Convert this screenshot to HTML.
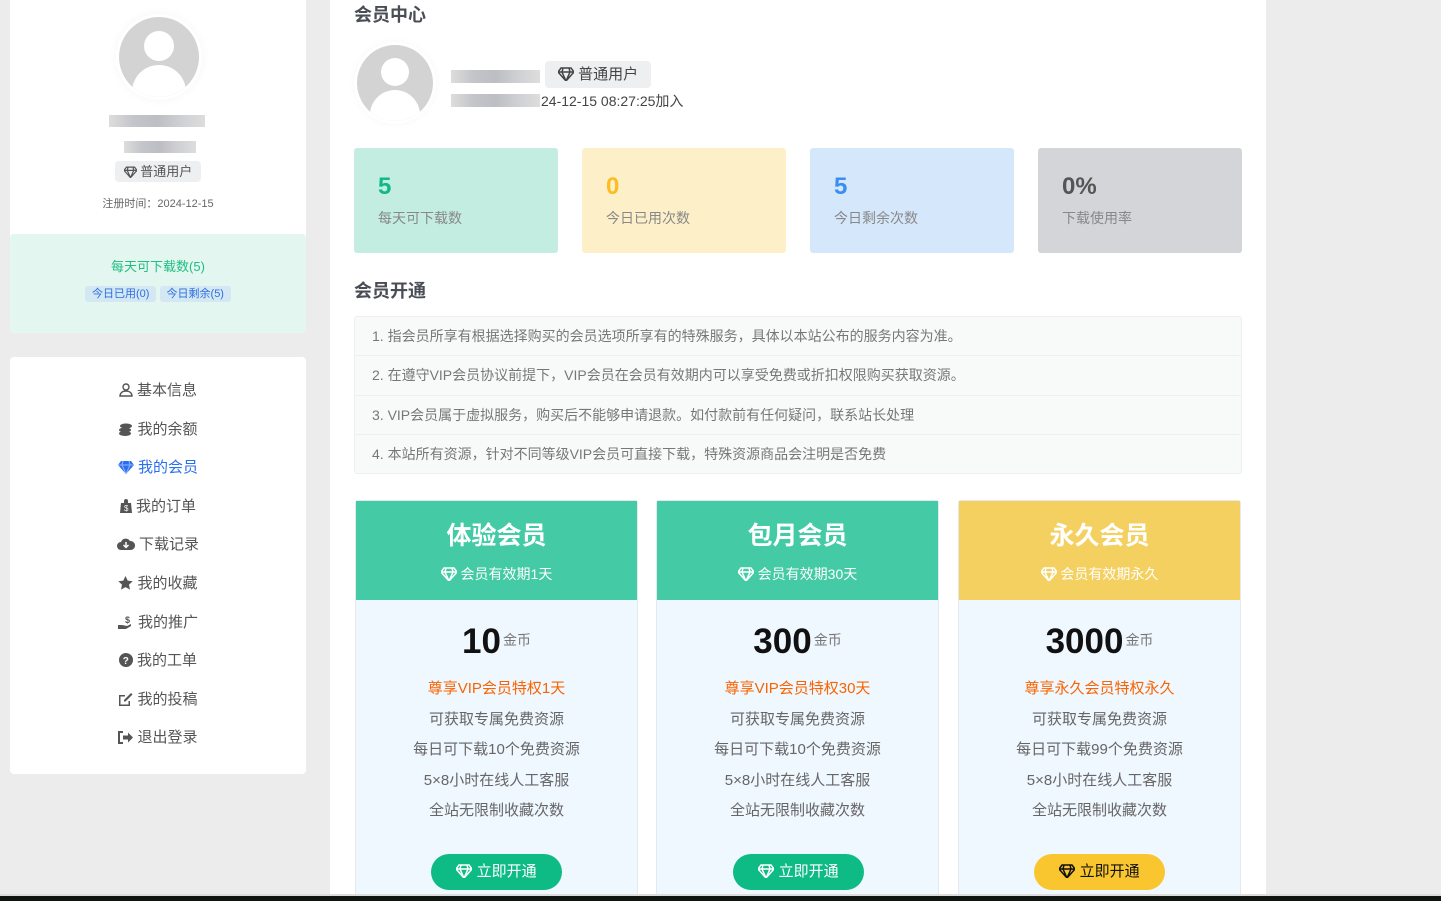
<!DOCTYPE html>
<html><head><meta charset="utf-8"><style>
*{box-sizing:border-box;margin:0;padding:0}
body{width:1441px;height:901px;background:#ececec;font-family:"Liberation Sans","Noto Sans CJK SC",sans-serif;position:relative;overflow:hidden;color:#555}
.abs{position:absolute}
.card{background:#fff;border-radius:4px}
.blur{background:linear-gradient(90deg,#ddd,#c4c5ca,#bdbec3,#cfd0d4,#ddd)}
.dia{display:inline-block;vertical-align:-2px}
.menu div{height:38.6px;line-height:38.6px;text-align:center;font-size:15px;color:#555}
.menu svg{vertical-align:-2px;margin-right:4px}
.stat{position:absolute;top:148px;width:204px;height:105px;border-radius:3px;padding:24px 24px}
.stat b{display:block;font-size:24px;line-height:30px}
.stat span{display:block;font-size:14px;color:#888;margin-top:6px}
.notes{position:absolute;left:354px;top:316px;width:888px;height:158px;border:1px solid #eef0f0;background:#f8fafa;border-radius:3px}
.notes div{height:39.3px;line-height:38px;padding-left:17px;font-size:14px;color:#777;border-bottom:1px solid #eef0f0}
.notes div:last-child{border:0}
.pc{position:absolute;top:500px;width:283px;height:400px;background:#eff7ff;border:1px solid #e6e9ec;border-radius:3px;text-align:center}
.pc .hd{height:99px;color:#fff;padding-top:18px}
.pc .hd h3{font-size:25px;line-height:34px;font-weight:bold}
.pc .hd p{font-size:14px;margin-top:11px}
.pc .pr{margin-top:20px;font-size:35px;font-weight:bold;color:#111;line-height:40px}
.pc .pr small{font-size:14px;font-weight:normal;color:#777;vertical-align:8px;margin-left:2px}
.pc .l{font-size:15px;color:#666;line-height:30.5px}
.pc .l.o{color:#fa6400;margin-top:12px}
.pc .btn{position:absolute;left:75px;top:353px;width:131px;height:36px;border-radius:18px;color:#fff;font-size:15px;line-height:36px}
</style></head><body>

<div class="abs card" style="left:10px;top:-4px;width:296px;height:337px;overflow:hidden">
  <div class="abs" style="left:109px;top:21px;width:80px;height:80px;border-radius:50%;background:#d3d3d3;box-shadow:0 0 0 3px #fff,0 0 12px #eee;overflow:hidden">
    <div class="abs" style="left:25px;top:14px;width:30px;height:30px;border-radius:50%;background:#fff"></div>
    <div class="abs" style="left:13px;top:48px;width:54px;height:40px;border-radius:27px 27px 0 0;background:#fff"></div>
  </div>
  <div class="abs blur" style="left:99px;top:119px;width:96px;height:12px"></div>
  <div class="abs blur" style="left:114px;top:145px;width:72px;height:12px"></div>
  <div class="abs" style="left:105px;top:165px;width:86px;height:21px;background:#eeeff1;border-radius:4px;font-size:13px;line-height:21px;text-align:center;color:#555"><svg class="dia" width="13" height="12" viewBox="0 0 16 14"><path d="M3 1h10l3 4-8 9-8-9z M0 5h16 M5 1l-1 4 4 9 4-9-1-4" fill="none" stroke="#555" stroke-width="1.5"/></svg> 普通用户</div>
  <div class="abs" style="left:0;width:296px;top:199px;text-align:center;font-size:11px;color:#666">注册时间：2024-12-15</div>
  <div class="abs" style="left:0;top:238px;width:296px;height:99px;background:#e3f6f0;border-radius:4px;text-align:center">
    <div style="margin-top:22px;font-size:13px;color:#1fbe84">每天可下载数(5)</div>
    <div style="margin-top:10px;font-size:11px"><span style="background:#d3e8f2;color:#2d6fe0;padding:2px 7px;border-radius:3px">今日已用(0)</span> <span style="background:#d3e8f2;color:#2d6fe0;padding:2px 7px;border-radius:3px">今日剩余(5)</span></div>
  </div>
</div>

<div class="abs card menu" style="left:10px;top:357px;width:296px;height:417px;padding-top:15px">
  <div><svg width="14" height="14" viewBox="0 0 14 14"><circle cx="7" cy="4" r="3" fill="none" stroke="#555" stroke-width="1.4"/><path d="M1 13c0-3 2.5-5 6-5s6 2 6 5z" fill="none" stroke="#555" stroke-width="1.4"/></svg>基本信息</div>
  <div><svg width="15" height="13" viewBox="0 0 15 13"><ellipse cx="8" cy="3" rx="6" ry="2.5" fill="#555"/><ellipse cx="7" cy="7" rx="6" ry="2.5" fill="#555"/><ellipse cx="7" cy="10.5" rx="6" ry="2.5" fill="#555"/></svg>我的余额</div>
  <div style="color:#2b6ff0"><svg width="16" height="14" viewBox="0 0 16 14"><path d="M3 1h10l3 4-8 9-8-9z" fill="#2b6ff0"/><path d="M5 1l-1 4 4 9 4-9-1-4M0 5h16" stroke="#8fb6ff" fill="none"/></svg>我的会员</div>
  <div><svg width="12" height="14" viewBox="0 0 12 14"><path d="M1 4h10l1 10H0z M4 4V2a2 2 0 014 0v2" fill="#555"/><text x="4" y="12" font-size="8" fill="#fff">$</text></svg>我的订单</div>
  <div><svg width="18" height="14" viewBox="0 0 18 14"><path d="M4 13a4 4 0 010-8 5 5 0 019-1 4 4 0 011 9z" fill="#555"/><path d="M9 5v5M6.5 8l2.5 2.5L11.5 8" stroke="#fff" stroke-width="1.5" fill="none"/></svg>下载记录</div>
  <div><svg width="15" height="14" viewBox="0 0 15 14"><path d="M7.5 0l2.2 4.6 5 .6-3.7 3.4 1 5-4.5-2.5L3 13.6l1-5L.3 5.2l5-.6z" fill="#555"/></svg>我的收藏</div>
  <div><svg width="16" height="14" viewBox="0 0 16 14"><path d="M0 10h4l5 1 4-2v2l-5 3H0z" fill="#555"/><text x="7" y="8" font-size="9" fill="#555" font-weight="bold">$</text></svg>我的推广</div>
  <div><svg width="14" height="14" viewBox="0 0 14 14"><circle cx="7" cy="7" r="7" fill="#555"/><text x="3.8" y="11" font-size="10" fill="#fff" font-weight="bold">?</text></svg>我的工单</div>
  <div><svg width="15" height="14" viewBox="0 0 15 14"><path d="M1 3h6v1.5H2.5v8h8V9H12v5H1z" fill="#555"/><path d="M6 8l7-7 1.5 1.5-7 7H6z" fill="#555"/></svg>我的投稿</div>
  <div><svg width="15" height="13" viewBox="0 0 15 13"><path d="M5 1H1v11h4" stroke="#555" stroke-width="2" fill="none"/><path d="M5 4.5h5V1.5l5 5-5 5v-3H5z" fill="#555"/></svg>退出登录</div>
</div>

<div class="abs" style="left:330px;top:0;width:936px;height:895px;background:#fff"></div>
<div class="abs" style="left:354px;top:1px;font-size:18px;font-weight:bold;color:#4a4d55">会员中心</div>
<div class="abs" style="left:357px;top:45px;width:76px;height:76px;border-radius:50%;background:#d3d3d3;box-shadow:0 0 0 3px #fff,0 0 10px #eee;overflow:hidden">
  <div class="abs" style="left:24px;top:13px;width:28px;height:28px;border-radius:50%;background:#fff"></div>
  <div class="abs" style="left:13px;top:45px;width:50px;height:40px;border-radius:25px 25px 0 0;background:#fff"></div>
</div>
<div class="abs blur" style="left:451px;top:70px;width:89px;height:13px"></div>
<div class="abs blur" style="left:451px;top:94px;width:89px;height:13px"></div>
<div class="abs" style="left:545px;top:61px;width:106px;height:27px;background:#eeeff1;border-radius:4px;font-size:15px;line-height:27px;text-align:center;color:#444"><svg class="dia" width="16" height="14" viewBox="0 0 16 14"><path d="M3 1h10l3 4-8 9-8-9z M0 5h16 M5 1l-1 4 4 9 4-9-1-4" fill="none" stroke="#444" stroke-width="1.5"/></svg> 普通用户</div>
<div class="abs" style="left:541px;top:91px;font-size:14px;color:#444">24-12-15 08:27:25加入</div>

<div class="stat" style="left:354px;background:#c2ede0"><b style="color:#12b886">5</b><span>每天可下载数</span></div>
<div class="stat" style="left:582px;background:#fdefc8"><b style="color:#fbbd1f">0</b><span>今日已用次数</span></div>
<div class="stat" style="left:810px;background:#d5e7fb"><b style="color:#3a8ef0">5</b><span>今日剩余次数</span></div>
<div class="stat" style="left:1038px;background:#d4d5d9"><b style="color:#555">0%</b><span>下载使用率</span></div>

<div class="abs" style="left:354px;top:277px;font-size:18px;font-weight:bold;color:#4a4d55">会员开通</div>
<div class="notes">
<div>1. 指会员所享有根据选择购买的会员选项所享有的特殊服务，具体以本站公布的服务内容为准。</div>
<div>2. 在遵守VIP会员协议前提下，VIP会员在会员有效期内可以享受免费或折扣权限购买获取资源。</div>
<div>3. VIP会员属于虚拟服务，购买后不能够申请退款。如付款前有任何疑问，联系站长处理</div>
<div>4. 本站所有资源，针对不同等级VIP会员可直接下载，特殊资源商品会注明是否免费</div>
</div>

<div class="pc" style="left:355px"><div class="hd" style="background:#44cba5"><h3>体验会员</h3><p><svg class="dia" width="16" height="14" viewBox="0 0 16 14"><path d="M3 1h10l3 4-8 9-8-9z M0 5h16 M5 1l-1 4 4 9 4-9-1-4" fill="none" stroke="#fff" stroke-width="1.5"/></svg> 会员有效期1天</p></div>
<div class="pr">10<small>金币</small></div><div class="l o">尊享VIP会员特权1天</div><div class="l">可获取专属免费资源</div><div class="l">每日可下载10个免费资源</div><div class="l">5×8小时在线人工客服</div><div class="l">全站无限制收藏次数</div>
<div class="btn" style="background:#0fbb85"><svg class="dia" width="16" height="14" viewBox="0 0 16 14"><path d="M3 1h10l3 4-8 9-8-9z M0 5h16 M5 1l-1 4 4 9 4-9-1-4" fill="none" stroke="#fff" stroke-width="1.5"/></svg> 立即开通</div></div>

<div class="pc" style="left:656px"><div class="hd" style="background:#44cba5"><h3>包月会员</h3><p><svg class="dia" width="16" height="14" viewBox="0 0 16 14"><path d="M3 1h10l3 4-8 9-8-9z M0 5h16 M5 1l-1 4 4 9 4-9-1-4" fill="none" stroke="#fff" stroke-width="1.5"/></svg> 会员有效期30天</p></div>
<div class="pr">300<small>金币</small></div><div class="l o">尊享VIP会员特权30天</div><div class="l">可获取专属免费资源</div><div class="l">每日可下载10个免费资源</div><div class="l">5×8小时在线人工客服</div><div class="l">全站无限制收藏次数</div>
<div class="btn" style="background:#0fbb85;left:76px"><svg class="dia" width="16" height="14" viewBox="0 0 16 14"><path d="M3 1h10l3 4-8 9-8-9z M0 5h16 M5 1l-1 4 4 9 4-9-1-4" fill="none" stroke="#fff" stroke-width="1.5"/></svg> 立即开通</div></div>

<div class="pc" style="left:958px"><div class="hd" style="background:#f4d060"><h3>永久会员</h3><p><svg class="dia" width="16" height="14" viewBox="0 0 16 14"><path d="M3 1h10l3 4-8 9-8-9z M0 5h16 M5 1l-1 4 4 9 4-9-1-4" fill="none" stroke="#fff" stroke-width="1.5"/></svg> 会员有效期永久</p></div>
<div class="pr">3000<small>金币</small></div><div class="l o">尊享永久会员特权永久</div><div class="l">可获取专属免费资源</div><div class="l">每日可下载99个免费资源</div><div class="l">5×8小时在线人工客服</div><div class="l">全站无限制收藏次数</div>
<div class="btn" style="background:#f9c62f;color:#111;left:75px"><svg class="dia" width="16" height="14" viewBox="0 0 16 14"><path d="M3 1h10l3 4-8 9-8-9z M0 5h16 M5 1l-1 4 4 9 4-9-1-4" fill="none" stroke="#111" stroke-width="1.5"/></svg> 立即开通</div></div>

<div class="abs" style="left:0;top:894px;width:1441px;height:2px;background:#ddd"></div>
<div class="abs" style="left:0;top:896px;width:1441px;height:5px;background:#111511"></div>
</body></html>
